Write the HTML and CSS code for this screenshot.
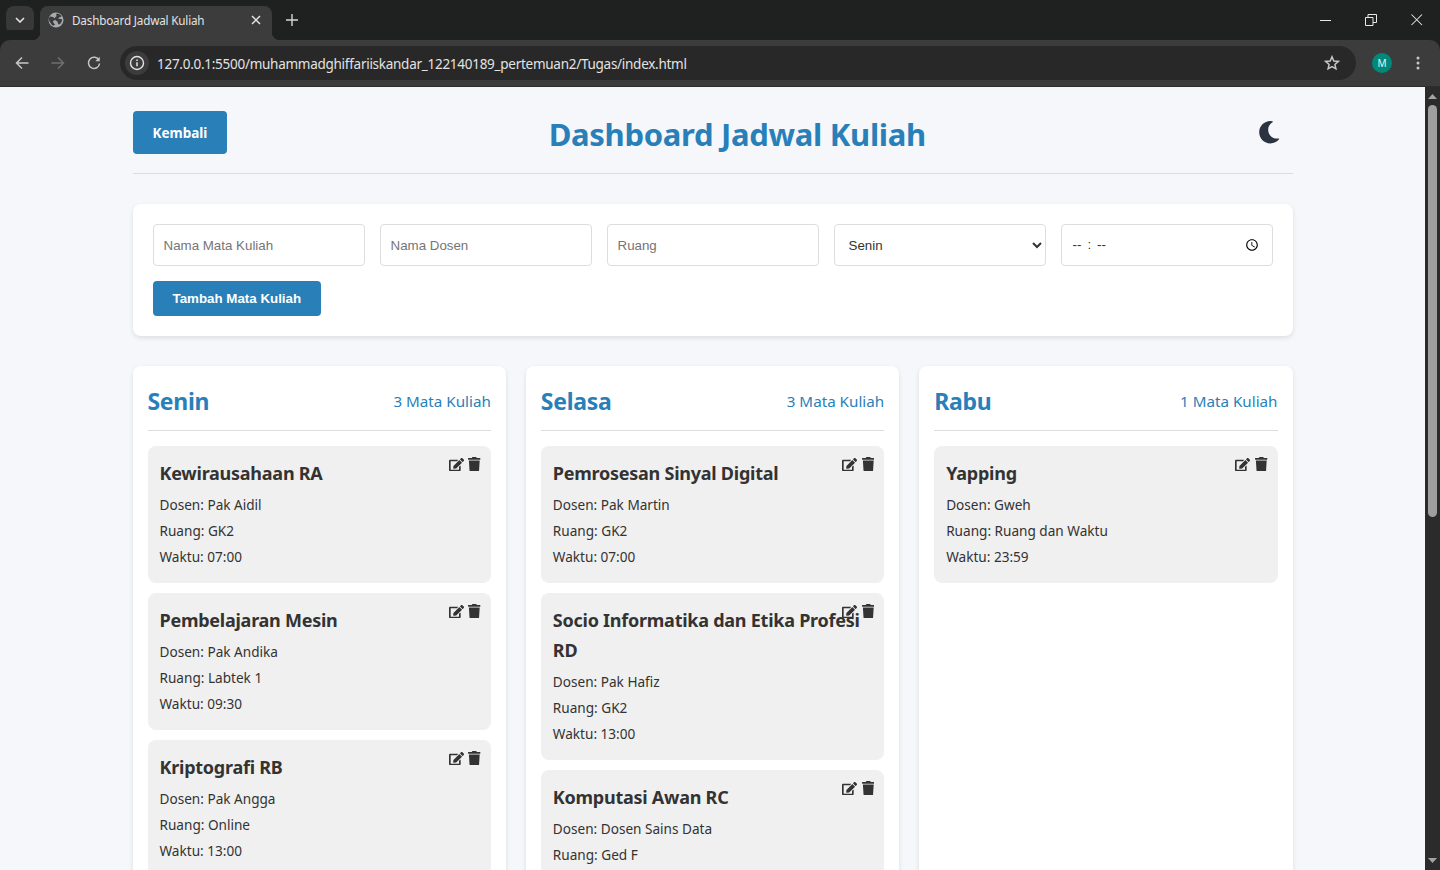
FILE: index.html
```html
<!DOCTYPE html>
<html lang="en">
<head>
  <meta charset="UTF-8">
  <title>Dashboard Jadwal Kuliah</title>
  <link rel="stylesheet" href="styles.css">
</head>
<body>

<svg class="defs" width="0" height="0">
  <symbol id="i-edit" viewBox="0 0 576 512"><path d="M402.6 83.2l90.2 90.2c3.8 3.8 3.8 10 0 13.8L274.4 405.6l-92.8 10.3c-12.4 1.4-22.9-9.1-21.5-21.5l10.3-92.8L388.8 83.2c3.8-3.8 10-3.8 13.8 0zm162-22.9l-48.8-48.8c-15.2-15.2-39.9-15.2-55.2 0l-35.4 35.4c-3.8 3.8-3.8 10 0 13.8l90.2 90.2c3.8 3.8 10 3.8 13.8 0l35.4-35.4c15.2-15.3 15.2-40 0-55.2zM384 346.2V448H64V128h229.8c3.2 0 6.2-1.3 8.5-3.5l40-40c7.6-7.6 2.2-20.5-8.5-20.5H48C21.5 64 0 85.5 0 112v352c0 26.5 21.5 48 48 48h352c26.5 0 48-21.5 48-48V306.2c0-10.7-12.9-16-20.5-8.5l-40 40c-2.2 2.3-3.5 5.3-3.5 8.5z"/></symbol>
  <symbol id="i-trash" viewBox="0 0 448 512"><path d="M432 32H312l-9.4-18.7A24 24 0 0 0 281.1 0H166.8a23.72 23.72 0 0 0-21.4 13.3L136 32H16A16 16 0 0 0 0 48v32a16 16 0 0 0 16 16h416a16 16 0 0 0 16-16V48a16 16 0 0 0-16-16zM53.2 467a48 48 0 0 0 47.9 45h245.8a48 48 0 0 0 47.9-45L416 128H32z"/></symbol>
</svg>

<!-- browser chrome -->
<div class="tabstrip">
  <div class="tab-search">
    <svg width="10" height="6" viewBox="0 0 10 6"><path d="M1 1l4 4 4-4" fill="none" stroke="#e3e3e3" stroke-width="1.6"/></svg>
  </div>
  <div class="tab">
    <svg class="tab-globe" width="16" height="16" viewBox="0 0 16 16"><circle cx="8" cy="8" r="7.5" fill="#a8abae"/><path d="M2.5 4.5c2 0 3 1 4 1.500s1 2-.5 2.500-1 2.500.5 3.500-1.500 2-2 1.500S1.500 10 1 8s.5-3 1.500-3.500zM9 1.500c2 0 4 1.500 4.500 2.500S11 5 10.500 6s2 1 3 1 .5 3-1 4.500-2 1-2.500 0 0-2-1.500-2.500S7 7.500 7 6s1.500-1 1.500-2S7.500 2 9 1.500z" fill="#3c3c3c"/></svg>
    <span class="tab-title">Dashboard Jadwal Kuliah</span>
    <svg class="tab-close" width="10" height="10" viewBox="0 0 10 10"><path d="M1 1l8 8M9 1l-8 8" stroke="#e3e3e3" stroke-width="1.5"/></svg>
  </div>
  <svg class="tab-new" width="12" height="12" viewBox="0 0 12 12"><path d="M6 0v12M0 6h12" stroke="#d5d5d5" stroke-width="1.4"/></svg>
  <div class="win-btns">
    <svg width="12" height="12" viewBox="0 0 12 12"><path d="M1 6.500h11" stroke="#e8e8e8"/></svg>
    <svg width="12" height="12" viewBox="0 0 12 12"><path d="M.5 3.500h7.500v8H.5zM3 3.500V.5h8.500v8H8" fill="none" stroke="#e8e8e8"/></svg>
    <svg width="12" height="12" viewBox="0 0 12 12"><path d="M.5 .5l10.500 10.500M11 .5L.5 11" stroke="#e8e8e8" stroke-width="1.050"/></svg>
  </div>
</div>
<div class="toolbar">
  <svg class="nav-icon" width="14" height="14" viewBox="0 0 14 14"><path d="M13.500 7H1.500M7 1.500L1.500 7 7 12.500" fill="none" stroke="#c7c7c7" stroke-width="1.500"/></svg>
  <svg class="nav-icon" width="14" height="14" viewBox="0 0 14 14"><path d="M.5 7h12M7 1.500L12.500 7 7 12.500" fill="none" stroke="#6f6f6f" stroke-width="1.500"/></svg>
  <svg class="nav-icon" width="14" height="14" viewBox="0 0 14 14"><path d="M12 4.200A5.600 5.600 0 1 0 12.600 7.500" fill="none" stroke="#c7c7c7" stroke-width="1.500"/><path d="M12.700 .8v4.400H8.300z" fill="#c7c7c7"/></svg>
  <div class="omnibox">
    <span class="info-chip">
      <svg width="16" height="16" viewBox="0 0 16 16"><circle cx="8" cy="8" r="6.500" fill="none" stroke="#e3e3e3" stroke-width="1.400"/><path d="M8 7.200v4M8 4.600v1.400" stroke="#e3e3e3" stroke-width="1.500"/></svg>
    </span>
    <span class="url">127.0.0.1:5500/muhammadghiffariiskandar_122140189_pertemuan2/Tugas/index.html</span>
    <svg class="star" width="16" height="16" viewBox="0 0 16 16"><path d="M8 1.800l1.800 4.200 4.500.4-3.400 3 1 4.400L8 11.500l-3.900 2.300 1-4.400-3.400-3 4.500-.4z" fill="none" stroke="#c7c7c7" stroke-width="1.500"/></svg>
  </div>
  <span class="avatar">M</span>
  <svg class="kebab" width="4" height="14" viewBox="0 0 4 14"><circle cx="2" cy="2" r="1.500"/><circle cx="2" cy="7" r="1.500"/><circle cx="2" cy="12" r="1.500"/></svg>
</div>

<div class="viewport">
  <div class="page">
    <div class="container">
      <header class="header">
        <a class="back-btn" href="#">Kembali</a>
        <h1>Dashboard Jadwal Kuliah</h1>
        <button class="theme-btn">
          <svg width="22.4" height="22.4" viewBox="0 0 512 512"><path d="M283.211 512c78.962 0 151.079-35.925 198.857-94.792 7.068-8.708-.639-21.43-11.562-19.35-124.203 23.654-238.262-71.576-238.262-196.954 0-72.222 38.662-138.635 101.498-174.394 9.686-5.512 7.25-20.197-3.756-22.23A258.156 258.156 0 0 0 283.211 0c-141.309 0-256 114.511-256 256 0 141.309 114.511 256 256 256z"/></svg>
        </button>
      </header>

      <form class="form-card">
        <div class="form-grid">
          <input type="text" placeholder="Nama Mata Kuliah">
          <input type="text" placeholder="Nama Dosen">
          <input type="text" placeholder="Ruang">
          <select>
            <option>Senin</option>
            <option>Selasa</option>
            <option>Rabu</option>
            <option>Kamis</option>
            <option>Jumat</option>
          </select>
          <input type="time" class="time-input">
        </div>
        <button type="button" class="add-btn">Tambah Mata Kuliah</button>
      </form>

      <div class="columns">
        <section class="day">
          <div class="day-head"><h2>Senin</h2><span class="count">3 Mata Kuliah</span></div>
          <div class="course">
            <h3>Kewirausahaan RA</h3>
            <p>Dosen: Pak Aidil</p><p>Ruang: GK2</p><p>Waktu: 07:00</p>
            <div class="actions"><svg class="ic-edit"><use href="#i-edit"/></svg><svg class="ic-trash"><use href="#i-trash"/></svg></div>
          </div>
          <div class="course">
            <h3>Pembelajaran Mesin</h3>
            <p>Dosen: Pak Andika</p><p>Ruang: Labtek 1</p><p>Waktu: 09:30</p>
            <div class="actions"><svg class="ic-edit"><use href="#i-edit"/></svg><svg class="ic-trash"><use href="#i-trash"/></svg></div>
          </div>
          <div class="course">
            <h3>Kriptografi RB</h3>
            <p>Dosen: Pak Angga</p><p>Ruang: Online</p><p>Waktu: 13:00</p>
            <div class="actions"><svg class="ic-edit"><use href="#i-edit"/></svg><svg class="ic-trash"><use href="#i-trash"/></svg></div>
          </div>
        </section>

        <section class="day">
          <div class="day-head"><h2>Selasa</h2><span class="count">3 Mata Kuliah</span></div>
          <div class="course">
            <h3>Pemrosesan Sinyal Digital</h3>
            <p>Dosen: Pak Martin</p><p>Ruang: GK2</p><p>Waktu: 07:00</p>
            <div class="actions"><svg class="ic-edit"><use href="#i-edit"/></svg><svg class="ic-trash"><use href="#i-trash"/></svg></div>
          </div>
          <div class="course">
            <h3>Socio Informatika dan Etika Profesi RD</h3>
            <p>Dosen: Pak Hafiz</p><p>Ruang: GK2</p><p>Waktu: 13:00</p>
            <div class="actions"><svg class="ic-edit"><use href="#i-edit"/></svg><svg class="ic-trash"><use href="#i-trash"/></svg></div>
          </div>
          <div class="course">
            <h3>Komputasi Awan RC</h3>
            <p>Dosen: Dosen Sains Data</p><p>Ruang: Ged F</p>
            <div class="actions"><svg class="ic-edit"><use href="#i-edit"/></svg><svg class="ic-trash"><use href="#i-trash"/></svg></div>
          </div>
        </section>

        <section class="day">
          <div class="day-head"><h2>Rabu</h2><span class="count">1 Mata Kuliah</span></div>
          <div class="course">
            <h3>Yapping</h3>
            <p>Dosen: Gweh</p><p>Ruang: Ruang dan Waktu</p><p>Waktu: 23:59</p>
            <div class="actions"><svg class="ic-edit"><use href="#i-edit"/></svg><svg class="ic-trash"><use href="#i-trash"/></svg></div>
          </div>
        </section>
      </div>
    </div>
  </div>

  <div class="scrollbar">
    <svg width="9" height="5" viewBox="0 0 9 5"><path d="M4.500 0L9 5H0z" fill="#a3a3a3"/></svg>
    <div class="scroll-track"><div class="scroll-thumb"></div></div>
    <svg width="9" height="5" viewBox="0 0 9 5"><path d="M0 0h9L4.500 5z" fill="#a3a3a3"/></svg>
  </div>
</div>

</body>
</html>
```

FILE: styles.css
```css
* { box-sizing: border-box; }
html, body { margin: 0; height: 870px; overflow: hidden; }
body { font-family: "Noto Sans", sans-serif; display: flex; flex-direction: column; background: #f5f7fa; color: #333; }
.defs { position: absolute; }

/* browser chrome */
.tabstrip { height: 40px; flex: none; background: #1f2020; display: flex; align-items: flex-start; padding: 6px 0 0 6px; position: relative; }
.tab-search { width: 28px; height: 28px; border-radius: 8px; background: #383838; display: flex; align-items: center; justify-content: center; }
.tab { width: 232px; height: 34px; margin-left: 6px; background: #3c3c3c; border-radius: 8px 8px 0 0; display: flex; align-items: center; padding: 0 11px 6px 8px; position: relative; z-index: 1; }
.tab::after { content: ""; position: absolute; right: -8px; bottom: 0; width: 8px; height: 8px; background: radial-gradient(circle at 100% 0, transparent 8px, #3c3c3c 8.5px); }
.tab::before { content: ""; position: absolute; left: -8px; bottom: 0; width: 8px; height: 8px; background: radial-gradient(circle at 0 0, transparent 8px, #3c3c3c 8.5px); }
.tab-title { font-size: 11.7px; color: #e3e3e3; margin-left: 8px; flex: 1; white-space: nowrap; letter-spacing: -0.18px; }
.tab-globe { flex: none; }
.tab-new { margin: 8px 0 0 14px; }
.win-btns { margin-left: auto; display: flex; gap: 34px; padding: 8px 17px 0 0; margin-top: -0.5px; }
.toolbar { height: 47px; flex: none; background: #3c3c3c; border-radius: 10px 10px 0 0; border-bottom: 1px solid #2e2e2e; display: flex; align-items: center; padding: 0 15px; position: relative; box-shadow: 0 -10px 0 #1f2020; }
.nav-icon { margin-right: 22px; flex: none; }
.omnibox { width: 1236px; height: 34px; margin-left: -3px; background: #282828; border-radius: 17px; display: flex; align-items: center; padding: 0 16px 0 5px; }
.info-chip { width: 24px; height: 24px; border-radius: 12px; background: #3c3c3c; display: flex; align-items: center; justify-content: center; }
.url { font-size: 13.5px; color: #e3e3e3; margin-left: 8px; padding-top: 1px; flex: 1; white-space: nowrap; letter-spacing: -0.27px; }
.avatar { width: 20px; height: 20px; margin-left: 16px; border-radius: 50%; background: #00897b; color: #e8f5f3; font-size: 10px; display: flex; align-items: center; justify-content: center; }
.kebab { margin-left: 24px; fill: #c7c7c7; }

/* viewport */
.viewport { flex: 1; display: flex; min-height: 0; }
.page { flex: 1; min-width: 0; height: 783px; overflow: hidden; padding-top: 20px; }
.container { width: 1160px; margin: 0 auto; }
.scrollbar { width: 15px; flex: none; background: #2b2b2b; display: flex; flex-direction: column; align-items: center; padding: 7px 0; }
.scroll-track { flex: 1; width: 9px; padding-top: 6px; }
.scroll-thumb { height: 412px; background: #9f9f9f; border-radius: 5px; }

/* header */
.header { display: flex; justify-content: space-between; align-items: center; height: 67px; padding-bottom: 15px; border-bottom: 1px solid #ddd; margin-bottom: 30px; }
.header h1 { margin: 0; padding-top: 3px; font-size: 31px; line-height: 48px; letter-spacing: -0.3px; color: #2980b9; font-weight: 700; }
.back-btn { background: #2980b9; color: #fff; padding: 11px 20px 9px; width: 94px; height: 43px; border-radius: 4px; font-size: 13.5px; line-height: 23px; font-weight: 700; text-decoration: none; }
.theme-btn { background: none; border: none; padding: 10px 12px 10px 10px; display: flex; }
.theme-btn svg { fill: #2c3340; }

/* form */
.form-card { background: #fff; padding: 20px; border-radius: 8px; box-shadow: 0 2px 5px rgba(0, 0, 0, 0.1); margin-bottom: 30px; }
.form-grid { display: grid; grid-template-columns: repeat(5, 1fr); gap: 15px; margin-bottom: 15px; }
.form-grid input, .form-grid select { height: 42px; padding: 10px; border: 1px solid #ddd; border-radius: 4px; font-family: "Liberation Sans", Arial, sans-serif; font-size: 13.33px; background: #fff; color: #333; width: 100%; }
.time-input::-webkit-datetime-edit-ampm-field { display: none; }
.time-input::-webkit-datetime-edit-hour-field, .time-input::-webkit-datetime-edit-minute-field { font-size: 16px; }
.time-input::-webkit-datetime-edit-text { padding: 0 5px; }
.add-btn { display: block; background: #2980b9; color: #fff; border: none; padding: 10px 20px; border-radius: 4px; font-family: "Liberation Sans", Arial, sans-serif; font-size: 13.33px; font-weight: 700; height: 35px; }

/* columns */
.columns { display: grid; grid-template-columns: repeat(3, 1fr); gap: 20px; }
.day { background: #fff; padding: 15px; border-radius: 8px; box-shadow: 0 2px 5px rgba(0, 0, 0, 0.1); }
.day-head { display: flex; justify-content: space-between; align-items: center; padding-bottom: 10px; border-bottom: 1px solid #ddd; margin-bottom: 15px; height: 50px; }
.day-head h2 { margin: 0; padding-top: 1px; font-size: 23px; line-height: 38px; letter-spacing: -0.3px; color: #2980b9; }
.count { font-size: 15.2px; line-height: 38px; padding-top: 1px; color: #2980b9; }
.course { background: #f0f0f0; border-radius: 8px; padding: 12px; margin-bottom: 10px; position: relative; }
.course h3 { margin: 0 0 5px; font-size: 18px; line-height: 30px; letter-spacing: -0.25px; font-weight: 700; color: #333; }
.course p { margin: 3px 0; font-size: 13.6px; line-height: 23px; color: #333; }
.actions { position: absolute; top: 11px; right: 10px; display: flex; align-items: center; gap: 4.5px; }
.ic-edit { width: 15px; height: 13.4px; fill: #333; }
.ic-trash { width: 12.6px; height: 14.4px; fill: #333; }
```
